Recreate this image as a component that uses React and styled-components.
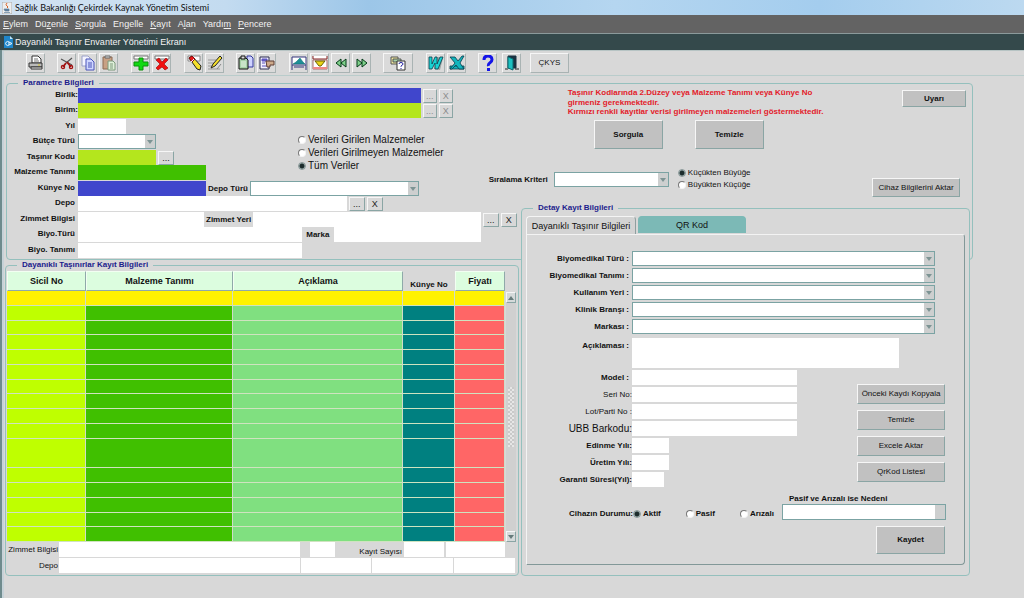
import React from "react";
import styled, { createGlobalStyle, css } from "styled-components";

const c = {
  face: "#d8d8d8",
  button: "#c1c1c1",
  line: "#94c0bd",
  shade: "#8aa5a4",
  navy: "#1c1c8c",
  blue: "#4046cc",
  lime: "#b4e61d",
  green: "#40c000",
};

const GlobalStyle = createGlobalStyle`
  *, *::before, *::after { box-sizing: border-box; }
  body {
    margin: 0;
    background: ${c.face};
    color: #111;
    font-family: "Liberation Sans", Arial, sans-serif;
    font-size: 9px;
    line-height: 10px;
  }
  button, input, select, textarea { font: inherit; color: inherit; margin: 0; padding: 0; border-radius: 0; }
`;

const Window = styled.div`
  display: flex;
  flex-direction: column;
  min-height: 100vh;
`;

const TitleBar = styled.header`
  display: flex;
  align-items: center;
  gap: 3px;
  height: 15px;
  padding-left: 2px;
  background: linear-gradient(90deg, #d3e3f2 0%, #c3dbf0 22%, #9cc6e8 36%, #b5d6f0 60%, #a4cdee 80%, #bcd9f0 100%);
`;

const AppTitle = styled.h1`
  margin: 0;
  font: 400 9px/14px Lato, "Open Sans", sans-serif;
  color: #111;
`;

const MenuBar = styled.nav`
  display: flex;
  align-items: center;
  gap: 7px;
  height: 18px;
  padding-left: 3px;
  background: #636363;
`;

const MenuItem = styled.button`
  border: 0;
  background: none;
  color: #f2f2f2;
  line-height: 12px;
`;

const ScreenBar = styled.div`
  display: flex;
  align-items: center;
  gap: 2px;
  height: 17px;
  padding-left: 3px;
  border-top: 1px solid #8b9a9b;
  background: #34494b;
  color: #f4f4f4;
`;

const ScreenTitle = styled.h2`
  margin: 0;
  font-size: 9px;
  font-weight: 400;
`;

const Workspace = styled.div`
  flex: 1;
  border-left: 2px solid #6f8b8d;
  box-shadow: inset 2px 0 0 #c6d2d8;
`;

const ToolBar = styled.div`
  display: flex;
  align-items: center;
  height: 26px;
  padding-left: 11px;
  border-top: 1px solid #b7c4c4;
  border-bottom: 1px solid #b9cccb;
`;

const ToolGroup = styled.div`
  display: flex;
  gap: 2px;
  margin-left: ${(p) => p.$lead}px;
`;

const raised = css`
  border: 1px solid;
  border-color: #f6f6f6 ${c.shade} ${c.shade} #f6f6f6;
`;

const ToolButton = styled.button`
  ${raised}
  display: flex;
  align-items: center;
  justify-content: center;
  width: ${(p) => p.$width || 19}px;
  height: 20px;
  border-right-color: #a9b3b3;
  border-bottom-color: #a9b3b3;
  background: #dadada;
  font-size: 8px;
`;

const Panels = styled.main`
  display: grid;
  grid-template-columns: minmax(0, 514fr) minmax(0, 452fr);
  grid-template-rows: 125px 57px auto;
  column-gap: 2px;
  padding: 2px 51px 20px 3px;
`;

const Frame = styled.fieldset`
  min-width: 0;
  margin: 0;
  padding: 0;
  border: 1px solid ${c.line};
  border-radius: 4px;
  grid-area: ${(p) => p.$area};
`;

const ParameterFrame = styled(Frame)`
  margin-left: 1px;
`;

const DetailFrame = styled(Frame)`
  margin-right: 3px;
  background: ${c.face};
`;

const FrameTitle = styled.legend`
  margin-left: 11px;
  padding: 0 5px;
  height: 10px;
  color: ${c.navy};
  font-size: 8px;
  font-weight: 700;
`;

const ParameterGrid = styled.div`
  display: grid;
  grid-template-columns: 71px 220px minmax(0, 191fr) 30px minmax(0, 454fr);
  grid-template-rows: repeat(5, 15px 16px) 16px;
`;

const FieldLabel = styled.label`
  font-size: ${(p) => p.$size || 8}px;
  font-weight: ${(p) => (p.$plain ? 400 : 700)};
  white-space: nowrap;
`;

const SideLabel = styled(FieldLabel)`
  grid-column: 1;
  grid-row: ${(p) => p.$row};
  justify-self: end;
  align-self: start;
  line-height: 14px;
  padding-right: ${(p) => (p.$tight ? 0 : 3)}px;
`;

const FieldRow = styled.div`
  grid-column: 2 / ${(p) => p.$end || 4};
  grid-row: ${(p) => p.$row};
  display: flex;
  align-items: center;
  gap: 2px;
  height: 15px;
  padding-right: ${(p) => p.$inset || 0}px;
`;

const TextBox = styled.input`
  display: block;
  height: 15px;
  min-width: 0;
  border: 0;
  background: ${(p) => p.$fill || "#fff"};
  ${(p) => (p.$width ? `width: ${p.$width}px;` : "flex: 1; width: 100%;")}
`;

const MiniButton = styled.button`
  ${raised}
  width: ${(p) => (p.disabled ? 14 : 16)}px;
  height: 14px;
  background: ${c.face};
  line-height: 10px;
  color: ${(p) => (p.disabled ? "#8c8c8c" : "#222")};
`;

const PushButton = styled.button`
  ${raised}
  width: ${(p) => p.$width}px;
  height: ${(p) => p.$height}px;
  background: ${c.button};
  font-size: 8px;
  font-weight: ${(p) => (p.$strong ? 700 : 400)};
  white-space: nowrap;
`;

const SelectFrame = styled.span`
  display: grid;
  grid-template-columns: minmax(0, 1fr) 10px;
  height: 15px;
  border: 1px solid #7ba3a3;
  background: #fff;
  ${(p) => (p.$width ? `width: ${p.$width}px;` : "flex: 1; min-width: 0;")}
`;

const SelectInput = styled.select`
  grid-area: 1 / 1 / 2 / 3;
  appearance: none;
  border: 0;
  background: none;
`;

const SelectArrow = styled.span`
  grid-area: 1 / 2;
  display: flex;
  align-items: center;
  justify-content: center;
  background: #cdcfcf;
  pointer-events: none;
`;

function Select({ id, label, width, faint }) {
  return (
    <SelectFrame $width={width}>
      <SelectInput id={id} aria-label={label}>
        <option value="" />
      </SelectInput>
      <SelectArrow>
        {!faint && (
          <svg width="6" height="4" viewBox="0 0 6 4">
            <path d="M0 0H6L3 4Z" fill="#7d9494" />
          </svg>
        )}
      </SelectArrow>
    </SelectFrame>
  );
}

const RadioList = styled.div`
  grid-area: ${(p) => p.$area || "auto"};
  display: flex;
  flex-direction: column;
  gap: ${(p) => p.$gap}px;
`;

const RadioLabel = styled.label`
  display: flex;
  align-items: center;
  gap: 2px;
  font-size: ${(p) => p.$size}px;
  font-weight: ${(p) => (p.$strong ? 700 : 400)};
  line-height: 12px;
  white-space: nowrap;
`;

const Radio = styled.input`
  appearance: none;
  flex: none;
  width: 8px;
  height: 8px;
  border: 1px solid;
  border-color: #777 #f4f4f4 #f4f4f4 #777;
  border-radius: 50%;
  background: #fff;
  &:checked {
    border-color: #8a9999;
    background: radial-gradient(circle, #1c2c2c 0 2px, #9fb0b0 3px);
  }
`;

const QueryArea = styled.div`
  grid-area: 1 / 4 / 9 / 6;
  display: flex;
  flex-direction: column;
  min-width: 0;
`;

const NoticeRow = styled.div`
  display: flex;
  justify-content: space-between;
  align-items: flex-start;
  height: 32px;
  padding: 0 6px 0 79px;
`;

const Notice = styled.div`
  color: #e3202a;
  font-size: 8px;
  font-weight: 700;
`;

const NoticeLine = styled.p`
  margin: 0;
  line-height: ${(p) => p.$leading}px;
  white-space: nowrap;
`;

const NoticeButton = styled.div`
  padding-top: 2px;
`;

const QueryButtons = styled.div`
  display: flex;
  gap: 32px;
  padding-left: 105px;
`;

const SortRow = styled.div`
  display: flex;
  align-items: flex-start;
  gap: 3px;
  padding: 18px 12px 0 0;
`;

const SortField = styled.div`
  display: flex;
  align-items: center;
  gap: 6px;
  padding-top: 5px;
  margin-right: 6px;
`;

const ExportSlot = styled.div`
  margin-left: auto;
  padding-top: 11px;
`;

const RecordArea = styled.div`
  display: grid;
  grid-template-columns: minmax(0, 1fr) 10px;
  column-gap: 1px;
  padding: 1px 2px 0 1px;
`;

const RecordTable = styled.table`
  width: 100%;
  table-layout: fixed;
  border-collapse: separate;
  border-spacing: 0;
`;

const Column = styled.col`
  width: ${(p) => (p.$width ? `${p.$width}px` : "auto")};
`;

const HeadCell = styled.th`
  height: 20px;
  padding: 0 0 1px;
  font-size: ${(p) => (p.$flat ? 8 : 9)}px;
  font-weight: 700;
  text-align: center;
  ${(p) =>
    p.$flat
      ? "vertical-align: bottom;"
      : "background: #dcfddf; border: 1px solid; border-color: #f2fff2 #8fa9a9 #8fa9a9 #f2fff2;"}
`;

const Cell = styled.td`
  padding: 0;
  border-bottom: 1px solid #cfe3c0;
  border-right: 1px solid #cfdcc8;
  background: ${(p) => p.$fill};
`;

const Row = styled.tr`
  height: 15px;
  &:nth-child(4n + 3) { height: 14px; }
  &:nth-child(11) { height: 29px; }
`;

const ScrollTrack = styled.div`
  display: flex;
  flex-direction: column;
  justify-content: space-between;
  align-items: center;
  margin-top: 21px;
  background: #d0d0d0;
`;

const ScrollButton = styled.button`
  ${raised}
  display: flex;
  align-items: center;
  justify-content: center;
  width: 10px;
  height: 11px;
  background: #d5dada;
`;

const ScrollGrip = styled.div`
  width: 6px;
  height: 60px;
  background: repeating-conic-gradient(#e6e6e6 0 25%, #c9c9c9 0 50%) 0 0 / 4px 4px;
`;

const Totals = styled.div`
  display: grid;
  grid-template-columns: 52px minmax(0, 243fr) minmax(0, 70fr) minmax(0, 82fr) minmax(0, 61fr);
  grid-auto-rows: 15px;
  column-gap: 1px;
  row-gap: 1px;
  padding: 0 3px 2px 0;
`;

const TotalsLabel = styled(FieldLabel)`
  align-self: center;
  text-align: right;
`;

const TotalsEnd = styled.div`
  grid-column: 3 / 6;
  display: flex;
  align-items: center;
  gap: 2px;
  padding: 0 10px 0 9px;
`;

const CountLabel = styled(FieldLabel)`
  margin-left: auto;
  padding-top: 4px;
`;

const TabRow = styled.div`
  display: flex;
  align-items: flex-end;
  gap: 2px;
  height: 21px;
  padding: 0 4px;
`;

const Tab = styled.button`
  height: ${(p) => (p.$current ? 18 : 17)}px;
  width: ${(p) => (p.$current ? 110 : 108)}px;
  margin-bottom: ${(p) => (p.$current ? 0 : 1)}px;
  border: 1px solid;
  border-bottom: 0;
  border-radius: 4px 4px 0 0;
  border-color: ${(p) => (p.$current ? "#f4f4f4 #8f9f9f #fff #f4f4f4" : "#7cb9b6")};
  background: ${(p) => (p.$current ? "#d3d3d3" : "#7cb9b6")};
  font-size: 9px;
  white-space: nowrap;
`;

const TabPanel = styled.div`
  margin: 0 4px 8px 4px;
  padding: 16px 0 10px;
  border: 1px solid;
  border-color: #f3f3f3 #829898 #829898 #f3f3f3;
  border-radius: 0 3px 4px 0;
`;

const DetailGrid = styled.div`
  display: grid;
  grid-template-columns: 105px 165px minmax(0, 1fr);
  grid-template-rows: repeat(5, 15px) 32px repeat(7, 15px);
  row-gap: 2px;
`;

const DetailLabel = styled(FieldLabel)`
  grid-column: 1;
  justify-self: end;
  align-self: start;
  line-height: ${(p) => (p.$low ? 20 : 15)}px;
  padding-right: ${(p) => (p.$tight ? 0 : 3)}px;
`;

const WideControl = styled.div`
  grid-column: 2 / 4;
  display: flex;
  align-items: flex-end;
  margin-right: ${(p) => p.$inset}px;
`;

const NoteBox = styled.textarea`
  display: block;
  flex: 1;
  min-width: 0;
  height: 30px;
  border: 0;
  background: #fff;
  resize: none;
`;

const SideButtons = styled.div`
  grid-area: 7 / 3 / 14 / 4;
  justify-self: end;
  display: flex;
  flex-direction: column;
  gap: 6px;
  padding: 14px 19px 0 0;
`;

const StatusRow = styled.div`
  display: flex;
  align-items: flex-end;
  padding: 7px 18px 0 0;
`;

const StatusLabel = styled(FieldLabel)`
  width: 106px;
  text-align: right;
  padding-bottom: 1px;
`;

const StatusChoices = styled.div`
  display: flex;
  gap: 25px;
  flex: 1;
  min-width: 0;
`;

const ReasonField = styled.div`
  display: flex;
  flex-direction: column;
  width: 164px;
  height: 26px;
`;

const ReasonLabel = styled(FieldLabel)`
  padding-left: 7px;
`;

const SaveRow = styled.div`
  display: flex;
  justify-content: flex-end;
  padding: 6px 19px 0 0;
`;

const paperEdge = "#333";

const icons = {
  print: (
    <>
      <path d="M4 1h6l3 3v4H4z" fill="#fff" stroke={paperEdge} />
      <path d="M6 4h4M6 6h5" stroke="#777" />
      <path d="M1 8h13v4H1z" fill="#bbb" stroke={paperEdge} />
      <path d="M3 12h11v2H3z" fill="#eee" stroke={paperEdge} />
      <path d="M10 10h2" stroke="#d7c52a" />
    </>
  ),
  cut: (
    <>
      <path d="M2 4l11 6M13 3L7 8" stroke="#555" strokeWidth="1.2" />
      <path d="M7 8L4 12M8 7l4 5" stroke="#a31212" strokeWidth="1.8" />
      <circle cx="4" cy="12" r="1.6" fill="none" stroke="#a31212" strokeWidth="1.3" />
      <circle cx="12" cy="12" r="1.6" fill="none" stroke="#a31212" strokeWidth="1.3" />
    </>
  ),
  copy: (
    <>
      <path d="M2 1h6l2 2v8H2z" fill="#f4f4ff" stroke="#9aa0c8" />
      <path d="M6 4h5l3 3v8H6z" fill="#cfd6ff" stroke="#4a55b8" />
      <path d="M8 8h4M8 10h4M8 12h4" stroke="#4a55b8" />
    </>
  ),
  paste: (
    <>
      <path d="M2 2h9v12H2z" fill="#c8a184" stroke="#8c6a55" />
      <path d="M4 1h5v2H4z" fill="#ddd" stroke="#666" />
      <path d="M7 6h5l2 2v7H7z" fill="#dff0da" stroke="#7d9a7d" />
      <path d="M9 9h3M9 11h3M9 13h3" stroke="#7d9a7d" />
    </>
  ),
  add: (
    <>
      <path d="M1 1h14v3H1z" fill="#fff" stroke="#777" />
      <path d="M6 3h4v4h5v4h-5v4H6v-4H1V7h5z" fill="#12d812" stroke="#0a900a" />
    </>
  ),
  remove: (
    <>
      <path d="M1 1h14v3H1z" fill="#fff" stroke="#777" />
      <path d="M2 5l3-2 3 4 4-4 2 2-4 4 4 4-3 2-3-3-4 3-2-2 4-4z" fill="#f01010" stroke="#900" strokeWidth=".6" />
    </>
  ),
  erase: (
    <>
      <path d="M2 1h12v5H2z" fill="#fff" stroke="#888" />
      <path d="M3 3l3-2 9 10-1 4-3-1z" fill="#f5e02c" stroke="#222" />
      <path d="M3 3l3-2 3 3-3 3z" fill="#e81c1c" stroke="#801010" />
      <path d="M8 4L5 7" stroke="#fff" />
    </>
  ),
  edit: (
    <>
      <path d="M1 5h8M1 8h6M1 11h5M1 14h12" stroke="#999" />
      <path d="M13 1l2 2-7 8-4 2 2-4z" fill="#f5e02c" stroke="#222" />
      <path d="M10 14l4-5" stroke="#888" />
    </>
  ),
  duplicate: (
    <>
      <path d="M9 1h4l2 2v9H9z" fill="#cfd3ff" stroke="#33389c" />
      <path d="M1 3h7l2 2v9H1z" fill="#a8d3a8" stroke="#111" />
      <path d="M3 1h4v3H3z" fill="#ddd" stroke="#111" />
      <path d="M3 7h5M3 9h5M3 11h5" stroke="#e9f6e9" />
    </>
  ),
  list: (
    <>
      <path d="M1 2h9v12H1z" fill="#f1efff" stroke="#2c2c50" />
      <path d="M3 4h5v2H3zM3 8h3M3 11h5" fill="#6660c8" stroke="#5a50bc" />
      <path d="M7 6h8v4h-4v2H8z" fill="#cda98a" stroke="#5c3d35" />
    </>
  ),
  save: (
    <>
      <path d="M1 2h14v8H1z" fill="#fff" stroke="#34347c" />
      <path d="M2 9l3-2 4-4 3 4 2 2z" fill="#1d8f96" stroke="#0f6a70" strokeWidth=".5" />
      <path d="M1 10v5M15 10v5M3 12h10" fill="none" stroke="#34347c" />
    </>
  ),
  fetch: (
    <>
      <path d="M1 1v3h14V1" fill="#fff" stroke="#822" />
      <path d="M1 5h14v9H1z" fill="#fff" stroke="#a76d6d" />
      <path d="M3 6h10l-4 5H7z" fill="#e9d416" stroke="#6d6206" />
      <path d="M1 12h14v2H1z" fill="#e88" />
    </>
  ),
  previous: <path d="M8 4v8L3 8zM13 4v8L8 8z" fill="#7fd08a" stroke="#053b18" />,
  next: <path d="M3 4v8l5-4zM8 4v8l5-4z" fill="#7fd08a" stroke="#053b18" />,
  listHelp: (
    <>
      <path d="M1 2h7v7H1z" fill="#efe9a0" stroke="#555" />
      <path d="M3 4h8v3H3z" fill="#a8d3a8" stroke="#555" />
      <path d="M7 6h8v9H7z" fill="#fff" stroke="#333" />
      <path d="M9 9q0-1.500 2-1.500t2 1.500q0 1-2 2v.7M11 13v1" fill="none" stroke="#2020a0" />
    </>
  ),
  word: (
    <>
      <path d="M9 2l6 1-3 12-6-1z" fill="#9aa3a3" />
      <path d="M1 2h3l0 7 3-7h2l0 7 3-7h3l-5 12H7l0-6-3 6H1z" fill="#18d3d3" stroke="#083c4c" strokeWidth=".8" />
    </>
  ),
  excel: (
    <>
      <path d="M1 11h14v3H1z" fill="#12b5bd" stroke="#083c4c" strokeWidth=".8" />
      <path d="M1 2h5l3 4 4-5h2l-4 7 4 6h-5l-3-4-4 4H1l5-6z" fill="#12b5bd" stroke="#083c4c" strokeWidth=".8" />
    </>
  ),
  help: (
    <>
      <path d="M4 5q0-4 4-4t4 3.500q0 2-2 3.300T8.500 11" fill="none" stroke="#1414e8" strokeWidth="3" />
      <path d="M7 13h3v3H7z" fill="#1414e8" />
    </>
  ),
  exit: (
    <>
      <path d="M4 1h8v12H4z" fill="#1b3140" stroke="#1b3140" />
      <path d="M4 2l5 2v11l-5-2z" fill="#1cc0c0" stroke="#0b6a70" />
      <path d="M1 14h3M11 14h4" stroke="#222" />
    </>
  ),
};

const tools = [
  { lead: 13, items: [["print", "Yazdır"]] },
  { lead: 12, items: [["cut", "Kes"], ["copy", "Kopyala"], ["paste", "Yapıştır"]] },
  { lead: 13, items: [["add", "Ekle"], ["remove", "Sil"]] },
  { lead: 13, items: [["erase", "Temizle"], ["edit", "Düzenle"]] },
  { lead: 12, items: [["duplicate", "Çoğalt"], ["list", "Liste"]] },
  { lead: 13, items: [["save", "Kaydet"], ["fetch", "Getir"], ["previous", "Önceki"], ["next", "Sonraki"]] },
  { lead: 12, width: 30, items: [["listHelp", "Değer listesi"]] },
  { lead: 13, items: [["word", "Word"], ["excel", "Excel"]] },
  { lead: 12, items: [["help", "Yardım"]] },
  { lead: 5, items: [["exit", "Çıkış"]] },
];

const menus = [
  ["", "E", "ylem"],
  ["Dü", "z", "enle"],
  ["", "S", "orgula"],
  ["En", "g", "elle"],
  ["", "K", "ayıt"],
  ["A", "l", "an"],
  ["Yardı", "m", ""],
  ["", "P", "encere"],
];

const columns = [
  { title: "Sicil No", width: 79, fill: "#bfff00" },
  { title: "Malzeme Tanımı", width: 147, fill: "#40c000" },
  { title: "Açıklama", fill: "#80e080" },
  { title: "Künye No", width: 52, fill: "#008080", flat: true },
  { title: "Fiyatı", width: 50, fill: "#ff6666" },
];

const recordRows = Array.from({ length: 16 }, (_, i) => i);

function ParameterPanel() {
  return (
    <ParameterFrame $area="1 / 1 / 3 / 3">
      <FrameTitle>Parametre Bilgileri</FrameTitle>
      <ParameterGrid>
        <SideLabel $row={1} $tight htmlFor="birlik">Birlik:</SideLabel>
        <FieldRow $row={1} $inset={36}>
          <TextBox id="birlik" $fill={c.blue} />
          <MiniButton disabled>...</MiniButton>
          <MiniButton disabled>X</MiniButton>
        </FieldRow>
        <SideLabel $row={2} $tight htmlFor="birim">Birim:</SideLabel>
        <FieldRow $row={2} $inset={36}>
          <TextBox id="birim" $fill={c.lime} />
          <MiniButton disabled>...</MiniButton>
          <MiniButton disabled>X</MiniButton>
        </FieldRow>
        <SideLabel $row={3} htmlFor="yil">Yıl</SideLabel>
        <FieldRow $row={3}><TextBox id="yil" $width={48} /></FieldRow>
        <SideLabel $row={4} htmlFor="butce">Bütçe Türü</SideLabel>
        <FieldRow $row={4} $end={3}><Select id="butce" width={78} /></FieldRow>
        <SideLabel $row={5} htmlFor="tasinir">Taşınır Kodu</SideLabel>
        <FieldRow $row={5} $end={3}>
          <TextBox id="tasinir" $width={78} $fill={c.lime} />
          <MiniButton>...</MiniButton>
        </FieldRow>
        <SideLabel $row={6} htmlFor="malzeme">Malzeme Tanımı</SideLabel>
        <FieldRow $row={6} $end={3}><TextBox id="malzeme" $width={128} $fill={c.green} /></FieldRow>
        <RadioList $area="4 / 3 / 7 / 4" $gap={1}>
          <RadioLabel $size={10}><Radio type="radio" name="veri" />Verileri Girilen Malzemeler</RadioLabel>
          <RadioLabel $size={10}><Radio type="radio" name="veri" />Verileri Girilmeyen Malzemeler</RadioLabel>
          <RadioLabel $size={10}><Radio type="radio" name="veri" defaultChecked />Tüm Veriler</RadioLabel>
        </RadioList>
        <SideLabel $row={7} htmlFor="kunye">Künye No</SideLabel>
        <FieldRow $row={7} $inset={70}>
          <TextBox id="kunye" $width={128} $fill={c.blue} />
          <FieldLabel htmlFor="depoTuru">Depo Türü</FieldLabel>
          <Select id="depoTuru" />
        </FieldRow>
        <SideLabel $row={8} htmlFor="depo">Depo</SideLabel>
        <FieldRow $row={8} $inset={106}>
          <TextBox id="depo" />
          <MiniButton>...</MiniButton>
          <MiniButton>X</MiniButton>
        </FieldRow>
        <SideLabel $row={9} htmlFor="zimmet">Zimmet Bilgisi</SideLabel>
        <FieldRow $row={9} $end={5} $inset={2}>
          <TextBox id="zimmet" $width={126} />
          <FieldLabel htmlFor="zimmetYeri">Zimmet Yeri</FieldLabel>
          <TextBox id="zimmetYeri" />
          <MiniButton>...</MiniButton>
          <MiniButton>X</MiniButton>
        </FieldRow>
        <SideLabel $row={10} htmlFor="biyoTuru">Biyo.Türü</SideLabel>
        <FieldRow $row={10} $inset={8}>
          <TextBox id="biyoTuru" $width={224} />
          <FieldLabel htmlFor="marka">&nbsp;Marka&nbsp;</FieldLabel>
          <TextBox id="marka" />
        </FieldRow>
        <SideLabel $row={11} htmlFor="biyoTanimi">Biyo. Tanımı</SideLabel>
        <FieldRow $row={11}><TextBox id="biyoTanimi" $width={224} /></FieldRow>

        <QueryArea>
          <NoticeRow>
            <Notice>
              <NoticeLine $leading={10}>
                Taşınır Kodlarında 2.Düzey veya Malzeme Tanımı veya Künye No
                <br />
                girmeniz gerekmektedir.
              </NoticeLine>
              <NoticeLine $leading={8}>
                Kırmızı renkli kayıtlar verisi girilmeyen malzemeleri göstermektedir.
              </NoticeLine>
            </Notice>
            <NoticeButton><PushButton $width={64} $height={17} $strong>Uyarı</PushButton></NoticeButton>
          </NoticeRow>
          <QueryButtons>
            <PushButton $width={69} $height={29} $strong>Sorgula</PushButton>
            <PushButton $width={69} $height={29} $strong>Temizle</PushButton>
          </QueryButtons>
          <SortRow>
            <SortField>
              <FieldLabel htmlFor="siralama">Sıralama Kriteri</FieldLabel>
              <Select id="siralama" width={115} />
            </SortField>
            <RadioList $gap={0}>
              <RadioLabel $size={8}><Radio type="radio" name="sira" defaultChecked />Küçükten Büyüğe</RadioLabel>
              <RadioLabel $size={8}><Radio type="radio" name="sira" />Büyükten Küçüğe</RadioLabel>
            </RadioList>
            <ExportSlot><PushButton $width={88} $height={19}>Cihaz Bilgilerini Aktar</PushButton></ExportSlot>
          </SortRow>
        </QueryArea>
      </ParameterGrid>
    </ParameterFrame>
  );
}

function RecordPanel() {
  return (
    <Frame $area="3 / 1 / 4 / 2">
      <FrameTitle>Dayanıklı Taşınırlar Kayıt Bilgileri</FrameTitle>
      <RecordArea>
        <RecordTable>
          <colgroup>
            {columns.map((col) => <Column key={col.title} $width={col.width} />)}
          </colgroup>
          <thead>
            <tr>
              {columns.map((col) => <HeadCell key={col.title} $flat={col.flat}>{col.title}</HeadCell>)}
            </tr>
          </thead>
          <tbody>
            {recordRows.map((r) => (
              <Row key={r}>
                {columns.map((col) => (
                  <Cell key={col.title} $fill={r === 0 ? "#fff200" : col.fill} />
                ))}
              </Row>
            ))}
          </tbody>
        </RecordTable>
        <ScrollTrack>
          <ScrollButton aria-label="Yukarı">
            <svg width="6" height="4" viewBox="0 0 6 4"><path d="M0 4H6L3 0Z" fill="#667b7b" /></svg>
          </ScrollButton>
          <ScrollGrip />
          <ScrollButton aria-label="Aşağı">
            <svg width="6" height="4" viewBox="0 0 6 4"><path d="M0 0H6L3 4Z" fill="#667b7b" /></svg>
          </ScrollButton>
        </ScrollTrack>
      </RecordArea>
      <Totals>
        <TotalsLabel $plain htmlFor="altZimmet">Zimmet Bilgisi</TotalsLabel>
        <TextBox id="altZimmet" />
        <TotalsEnd>
          <TextBox aria-label="Zimmet kodu" $width={25} />
          <CountLabel $plain htmlFor="kayit">Kayıt Sayısı</CountLabel>
          <TextBox id="kayit" $width={40} />
          <TextBox aria-label="Toplam" $width={59} />
        </TotalsEnd>
        <TotalsLabel $plain htmlFor="altDepo">Depo</TotalsLabel>
        <TextBox id="altDepo" />
        <TextBox aria-label="Depo kodu" />
        <TextBox aria-label="Depo türü" />
        <TextBox aria-label="Depo yeri" />
      </Totals>
    </Frame>
  );
}

const deviceSelects = ["Biyomedikal Türü :", "Biyomedikal Tanımı :", "Kullanım Yeri :", "Klinik Branşı :", "Markası :"];

const deviceInputs = [
  { label: "Model :", width: 165 },
  { label: "Seri No:", width: 165, plain: true, tight: true },
  { label: "Lot/Parti No :", width: 165, plain: true, tight: true },
  { label: "UBB Barkodu:", width: 165, plain: true, tight: true, size: 10 },
  { label: "Edinme Yılı:", width: 37, tight: true },
  { label: "Üretim Yılı:", width: 37, tight: true },
  { label: "Garanti Süresi(Yıl):", width: 32, tight: true },
];

function DetailPanel() {
  return (
    <DetailFrame $area="2 / 2 / 4 / 3">
      <FrameTitle>Detay Kayıt Bilgileri</FrameTitle>
      <TabRow role="tablist">
        <Tab role="tab" aria-selected="true" $current>Dayanıklı Taşınır Bilgileri</Tab>
        <Tab role="tab" aria-selected="false">QR Kod</Tab>
      </TabRow>
      <TabPanel role="tabpanel">
        <DetailGrid>
          {deviceSelects.map((label, i) => (
            <React.Fragment key={label}>
              <DetailLabel htmlFor={`secim${i}`}>{label}</DetailLabel>
              <WideControl $inset={29}><Select id={`secim${i}`} /></WideControl>
            </React.Fragment>
          ))}
          <DetailLabel $low htmlFor="aciklama">Açıklaması :</DetailLabel>
          <WideControl $inset={65}><NoteBox id="aciklama" /></WideControl>
          {deviceInputs.map((f, i) => (
            <React.Fragment key={f.label}>
              <DetailLabel htmlFor={`alan${i}`} $plain={f.plain} $tight={f.tight} $size={f.size}>{f.label}</DetailLabel>
              <TextBox id={`alan${i}`} $width={f.width} />
            </React.Fragment>
          ))}
          <SideButtons>
            {["Önceki Kaydı Kopyala", "Temizle", "Excele Aktar", "QrKod Listesi"].map((text) => (
              <PushButton key={text} $width={88} $height={20}>{text}</PushButton>
            ))}
          </SideButtons>
        </DetailGrid>
        <StatusRow>
          <StatusLabel as="span">Cihazın Durumu:</StatusLabel>
          <StatusChoices>
            <RadioLabel $size={8} $strong><Radio type="radio" name="durum" defaultChecked />Aktif</RadioLabel>
            <RadioLabel $size={8} $strong><Radio type="radio" name="durum" />Pasif</RadioLabel>
            <RadioLabel $size={8} $strong><Radio type="radio" name="durum" />Arızalı</RadioLabel>
          </StatusChoices>
          <ReasonField>
            <ReasonLabel htmlFor="neden">Pasif ve Arızalı ise Nedeni</ReasonLabel>
            <Select id="neden" faint />
          </ReasonField>
        </StatusRow>
        <SaveRow><PushButton $width={69} $height={28} $strong>Kaydet</PushButton></SaveRow>
      </TabPanel>
    </DetailFrame>
  );
}

export default function App() {
  return (
    <Window>
      <GlobalStyle />
      <TitleBar>
        <svg width="10" height="12" viewBox="0 0 10 12">
          <path d="M0 0h10v12H0z" fill="#eee" stroke="#aaa" />
          <path d="M5 1q-2 2 0 3t0 2" fill="none" stroke="#d8642a" />
          <path d="M2 7h5v2H3zM2 10.500h6" fill="#5d7f9d" stroke="#5d7f9d" strokeWidth=".7" />
        </svg>
        <AppTitle>Sağlık Bakanlığı Çekirdek Kaynak Yönetim Sistemi</AppTitle>
      </TitleBar>
      <MenuBar>
        {menus.map(([before, key, after]) => (
          <MenuItem key={before + key + after}>{before}<u>{key}</u>{after}</MenuItem>
        ))}
      </MenuBar>
      <ScreenBar>
        <svg width="10" height="12" viewBox="0 0 10 12">
          <path d="M1 0h6l3 3v9H1z" fill="#1f86c9" />
          <path d="M7 0l3 3H7z" fill="#bfe3f7" />
          <path d="M6 6a2 2 0 1 0 0 3M6 6l3 1.500L6 9z" fill="none" stroke="#e8f7ff" />
        </svg>
        <ScreenTitle>Dayanıklı Taşınır Envanter Yönetimi Ekranı</ScreenTitle>
      </ScreenBar>
      <Workspace>
        <ToolBar>
          {tools.map((group) => (
            <ToolGroup key={group.items[0][0]} $lead={group.lead}>
              {group.items.map(([icon, name]) => (
                <ToolButton key={icon} aria-label={name} $width={group.width}>
                  <svg width="16" height="16" viewBox="0 0 16 16">{icons[icon]}</svg>
                </ToolButton>
              ))}
            </ToolGroup>
          ))}
          <ToolGroup $lead={9}><ToolButton $width={39}>ÇKYS</ToolButton></ToolGroup>
        </ToolBar>
        <Panels>
          <ParameterPanel />
          <RecordPanel />
          <DetailPanel />
        </Panels>
      </Workspace>
    </Window>
  );
}
